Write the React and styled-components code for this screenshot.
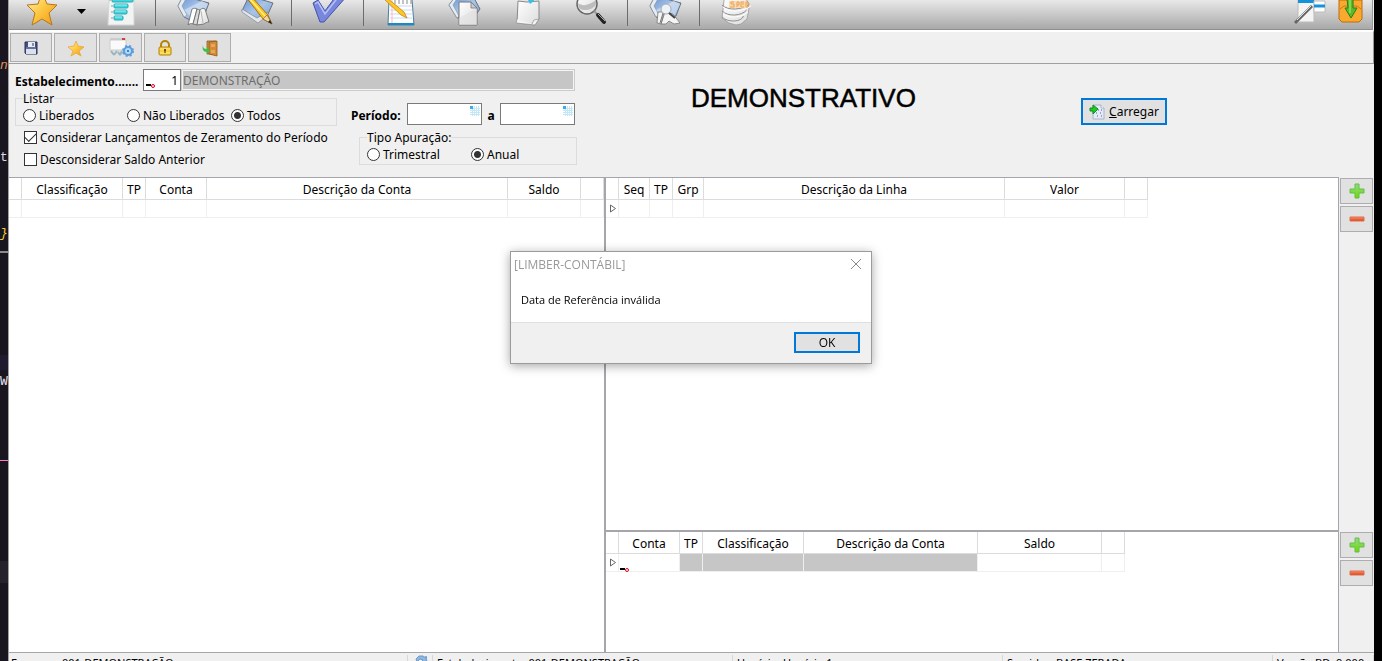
import React from "react";
import styled, { createGlobalStyle } from "styled-components";

const GlobalStyle = createGlobalStyle`
  * { box-sizing: border-box; }
  body { margin: 0; background: #000; overflow: hidden; }
  body, button, input {
    font-family: "Noto Sans", "DejaVu Sans", sans-serif;
    font-size: 12px;
    color: #000;
  }
`;

/* ---------- frame ---------- */
const Screen = styled.div`
  display: flex;
  height: 100vh;
  background: #000;
`;
const EditorStrip = styled.aside`
  flex: 0 0 8px;
  display: flex;
  flex-direction: column;
  overflow: hidden;
  background: #1a1620;
  font: 13px/18px "Liberation Mono", monospace;
`;
const CodeLine = styled.div`
  flex: none;
  height: ${(p) => p.$h}px;
  padding-top: ${(p) => p.$pad || 0}px;
  color: ${(p) => p.$color || "inherit"};
  background: ${(p) => p.$bg || "transparent"};
  font-style: ${(p) => (p.$italic ? "italic" : "normal")};
  overflow: hidden;
`;
const Window = styled.main`
  flex: 1;
  min-width: 0;
  display: flex;
  flex-direction: column;
  margin-right: 8px;
  border-left: 1px solid #a0a0a0;
  background: #f0f0f0;
`;

/* ---------- toolbars ---------- */
const MainToolbar = styled.header`
  flex: none;
  display: flex;
  height: 30px;
  margin-right: 1px;
  border-right: 1px solid #999;
  border-bottom: 1px solid #8f8f8f;
  background: linear-gradient(#e8e8e8, #a9a9a9);
`;
const ToolButton = styled.button`
  width: ${(p) => p.$w || 64}px;
  height: 28px;
  padding: 0;
  border: 0;
  background: none;
  display: flex;
  justify-content: center;
`;
const ToolSeparator = styled.span`
  width: 1px;
  height: 26px;
  margin: 0 4px 0 3px;
  background: #6c6c6c;
`;
const Spacer = styled.div`
  flex: 1;
`;
const SubToolbar = styled.nav`
  flex: none;
  display: flex;
  gap: 2px;
  height: 34px;
  padding: 1px 1px 0;
  border-top: 2px solid #fff;
  border-right: 1px solid #999;
  border-bottom: 1px solid #a0a0a0;
`;
const FlatButton = styled.button`
  flex: none;
  width: ${(p) => p.$w || 43}px;
  height: ${(p) => p.$h || 29}px;
  padding: 0;
  border: 1px solid #adadad;
  background: #e1e1e1;
  display: flex;
  align-items: center;
  justify-content: center;
`;

/* ---------- filters ---------- */
const Filters = styled.form`
  flex: none;
  display: flex;
  align-items: flex-start;
  height: 113px;
`;
const FilterFields = styled.div`
  flex: 0 0 568px;
  padding: 5px 0 0 6px;
`;
const FieldRow = styled.div`
  display: flex;
  align-items: center;
  height: 22px;
`;
const FieldLabel = styled.label`
  width: ${(p) => p.$w}px;
  height: 22px;
  font-weight: 700;
  line-height: 26px;
  white-space: nowrap;
  text-align: ${(p) => p.$align || "left"};
`;
const InputBox = styled.div`
  position: relative;
  width: ${(p) => p.$w}px;
  height: 22px;
`;
const TextInput = styled.input`
  display: block;
  width: 100%;
  height: 22px;
  padding: 0 2px;
  border: 1px solid #7a7a7a;
  background: #fff;
  text-align: right;
`;
const ReadOnlyInput = styled.input`
  width: 394px;
  height: 22px;
  padding: 0 1px;
  border: 1px solid #ccc;
  outline: 1px solid #f4f4f4;
  outline-offset: -2px;
  background: #c6c6c6;
  color: #6d6d6d;
`;
const EditMark = styled.svg`
  position: absolute;
  left: 3px;
  bottom: 1px;
`;
const CalendarMark = styled.svg`
  position: absolute;
  right: 2px;
  top: 3px;
`;
const FilterColumns = styled.div`
  display: flex;
`;
const ListColumn = styled.div`
  width: 322px;
  margin-right: 14px;
`;
const PeriodColumn = styled.div`
  width: 226px;
  padding-top: 12px;
`;
const OptionGroup = styled.fieldset`
  min-width: 0;
  margin: ${(p) => (p.$indent ? "5px 0 0 8px" : "0")};
  padding: 0 0 0 7px;
  border: 1px solid #dcdcdc;
`;
const GroupTitle = styled.legend`
  height: 14px;
  padding: 0;
  line-height: 16px;
`;
const OptionGrid = styled.div`
  display: grid;
  grid-template-columns: repeat(3, 104px);
  height: 20px;
`;
const Option = styled.label`
  display: flex;
  align-items: center;
  gap: 3px;
  white-space: nowrap;
`;
const Radio = styled.input`
  appearance: none;
  flex: none;
  width: 13px;
  height: 13px;
  margin: 0;
  border: 1px solid #333;
  border-radius: 50%;
  background: #fff;
  &:checked { background: radial-gradient(circle, #333 3px, #fff 4px); }
`;
const CheckRow = styled.label`
  display: flex;
  align-items: center;
  gap: 3px;
  height: 22px;
  padding-left: 9px;
  white-space: nowrap;
`;
const CheckBox = styled.input`
  appearance: none;
  flex: none;
  display: grid;
  place-items: center;
  width: 13px;
  height: 13px;
  margin: 0;
  border: 1px solid #333;
  background: #fff;
  &:checked::after {
    content: "";
    width: 10px;
    height: 5px;
    margin-bottom: 3px;
    border: solid #333;
    border-width: 0 0 1px 1px;
    transform: rotate(-45deg);
  }
`;
const Title = styled.h1`
  flex: 1;
  margin: 20px 0 0 114px;
  font: 400 26px/28px "Liberation Sans", Arial, sans-serif;
  -webkit-text-stroke: 0.5px #000;
`;
const LoadButton = styled.button`
  flex: none;
  display: flex;
  align-items: center;
  justify-content: center;
  gap: 4px;
  width: 86px;
  height: 27px;
  margin: 34px 207px 0 0;
  padding: 0;
  border: 2px solid #0078d7;
  background: #e1e1e1;
`;

/* ---------- grids ---------- */
const Workspace = styled.section`
  flex: 1;
  min-height: 0;
  display: flex;
  border-bottom: 1px solid #a5a5ab;
`;
const Panes = styled.div`
  flex: 1;
  min-width: 0;
  display: flex;
  border-top: 1px solid #a5a5ab;
  border-right: 1px solid #a5a5ab;
  background: #fff;
`;
const LeftPane = styled.div`
  flex: 0 0 597px;
  border-right: 2px solid #a5a5ab;
`;
const RightPanes = styled.div`
  flex: 1;
  min-width: 0;
  display: flex;
  flex-direction: column;
`;
const Pane = styled.div`
  flex: ${(p) => (p.$lower ? "0 0 122px" : "1")};
  border-top: ${(p) => (p.$lower ? "2px solid #a5a5ab" : "0")};
`;
const SideColumn = styled.div`
  flex: 0 0 35px;
  display: flex;
  flex-direction: column;
  justify-content: space-between;
  padding: 1px 1px 0;
`;
const SideButtons = styled.div`
  display: flex;
  flex-direction: column;
  gap: 2px;
  height: ${(p) => p.$h || 54}px;
`;
const Table = styled.table`
  table-layout: fixed;
  border-collapse: separate;
  border-spacing: 0;
  width: ${(p) => p.$w}px;
`;
const HeadCell = styled.th`
  height: 22px;
  padding: 3px 0 0;
  border-right: 1px solid #dcdcdc;
  border-bottom: 1px solid #dcdcdc;
  font-weight: 400;
  line-height: 18px;
  white-space: nowrap;
`;
const BodyCell = styled.td`
  position: relative;
  height: 18px;
  padding: 0 0 0 3px;
  border-right: 1px solid #efefef;
  border-bottom: 1px solid #efefef;
  background: ${(p) => (p.$shaded ? "#c6c6c6" : "#fff")};
  line-height: 0;
`;
const CellMark = styled.svg`
  position: absolute;
  left: 1px;
  bottom: -3px;
`;

/* ---------- status bar ---------- */
const StatusBar = styled.footer`
  flex: 0 0 8px;
  display: flex;
  padding-top: 2px;
  overflow: hidden;
`;
const StatusCell = styled.div`
  flex: ${(p) => (p.$grow ? "1" : "none")};
  width: ${(p) => (p.$w ? p.$w + "px" : "auto")};
  height: 20px;
  padding-left: ${(p) => p.$pad || 4}px;
  border-right: 1px solid #d7d7d7;
  font-size: 11px;
  line-height: 16px;
  white-space: pre;
  overflow: hidden;
`;

/* ---------- dialog ---------- */
const DialogBox = styled.div`
  position: fixed;
  top: 251px;
  left: 0;
  right: 0;
  width: 362px;
  margin: 0 auto;
  border: 1px solid #9b9b9b;
  background: #fff;
  box-shadow: 0 2px 10px rgba(0, 0, 0, 0.35);
  font-family: "Open Sans", "Noto Sans", sans-serif;
`;
const DialogHeader = styled.div`
  display: flex;
  align-items: center;
  justify-content: space-between;
  height: 24px;
  padding: 0 9px 0 3px;
  color: #999;
`;
const CloseButton = styled.button`
  display: flex;
  padding: 0;
  border: 0;
  background: none;
`;
const DialogText = styled.p`
  margin: 0;
  height: 46px;
  padding: 16px 10px 0;
  font-size: 11px;
  line-height: 16px;
`;
const DialogFooter = styled.div`
  display: flex;
  justify-content: flex-end;
  height: 41px;
  padding: 9px 11px 0;
  border-top: 1px solid #dfdfdf;
  background: #f0f0f0;
`;
const OkButton = styled.button`
  width: 66px;
  height: 21px;
  padding: 0;
  border: 2px solid #0078d7;
  background: #e1e1e1;
  font-family: inherit;
  line-height: 16px;
`;

/* ---------- drawings ---------- */
const Gradients = styled.svg`
  position: absolute;
`;
const Defs = () => (
  <Gradients width="0" height="0" aria-hidden="true">
    <defs>
      <linearGradient id="gold" x1="0" y1="0" x2="1" y2="1">
        <stop offset="0" stopColor="#fff6b8" /><stop offset=".5" stopColor="#fdc843" /><stop offset="1" stopColor="#ef9416" />
      </linearGradient>
      <linearGradient id="blue" x1="0" y1="0" x2="1" y2="1">
        <stop offset="0" stopColor="#5f8fd0" /><stop offset=".5" stopColor="#a9c4e8" /><stop offset="1" stopColor="#7a9ccc" />
      </linearGradient>
      <linearGradient id="paper" x1="0" y1="0" x2="1" y2="1">
        <stop offset="0" stopColor="#fff" /><stop offset="1" stopColor="#dcdcdc" />
      </linearGradient>
      <linearGradient id="green" x1="0" y1="0" x2="0" y2="1">
        <stop offset="0" stopColor="#93d98b" /><stop offset="1" stopColor="#6cdb00" />
      </linearGradient>
      <linearGradient id="red" x1="0" y1="0" x2="0" y2="1">
        <stop offset="0" stopColor="#f6996b" /><stop offset="1" stopColor="#e03a16" />
      </linearGradient>
    </defs>
  </Gradients>
);
const Art = ({ w = 36, h = 28, children }) => (
  <svg width={w} height={h} viewBox={`0 0 ${w} ${h}`} fill="none" aria-hidden="true">{children}</svg>
);
const BigStar = () => (
  <Art><path d="M19-8 24 4l10 1-8 8 3 12-10-6-10 6 3-12-8-8 11-1z" fill="url(#gold)" stroke="#b5761f" /></Art>
);
const TreeList = () => (
  <Art>
    <path d="M6-2h25v27H5z" fill="#f2f4f4" stroke="#d2d5d6" />
    {[[9, -2, 21], [11, 4, 14], [11, 10, 13], [11, 16, 9]].map(([x, y, w]) => (
      <g key={y}><rect x={x} y={y} width={w} height="4" rx="1" fill="#46d5dc" stroke="#20a8b4" /><path d={`M${x + 1} ${y + 1}h${w - 2}`} stroke="#a2f2f4" /><path d={`M${x - 3} ${y + 2}h2`} stroke="#999" /></g>
    ))}
  </Art>
);
const Frame = () => (
  <g>
    <path d="M9-4 35 3 30 16 18 21 10 17 4 6z" fill="url(#blue)" stroke="#69727f" />
    <path d="M9-4 4 6l6 11 3-2-5-9 5-9z" fill="#e6ebf2" stroke="#8792a0" strokeWidth=".6" />
    <path d="M10 10 28 1l6 3-5 11-10 4z" fill="#dbe7f6" opacity=".6" />
  </g>
);
const Report = () => (
  <Art>
    <Frame />
    <path d="M18 9c2-1 4-1 5 0l-4 15c-2-1-4 0-5 1z" fill="#fff" stroke="#666" strokeWidth=".8" />
    <path d="M23 9c1 0 2 1 3 1l-3 15-4-1z" fill="#d8d8d8" stroke="#666" strokeWidth=".8" />
    <path d="M26 10c2-2 4-2 5-1l4 13c-2 0-4 1-5 2l-7 1z" fill="url(#paper)" stroke="#666" strokeWidth=".8" />
    <path d="M27 11l2 12" stroke="#b5b5b5" />
  </Art>
);
const EditFrame = () => (
  <Art>
    <path d="M11-4 35 3 30 14 20 21 4 11z" fill="url(#blue)" stroke="#69727f" />
    <path d="M4 9l15 9 11-6v3l-10 8L4 12z" fill="#e3e7ec" stroke="#737c88" strokeWidth=".6" />
    <path d="M8-3 12-5 30 15l4 9-9-5z" fill="#ffc31e" stroke="#8c6111" strokeWidth=".8" />
    <path d="M10-3 27 16" stroke="#fff08a" strokeWidth="1.5" />
    <path d="m25 19 4-4 5 9z" fill="#f3d6a3" stroke="#76562d" strokeWidth=".6" /><path d="m32 20 2 4-4-2z" fill="#222" />
    <path d="m7-1 5-4" stroke="#c6382b" strokeWidth="4" />
  </Art>
);
const Check = () => (
  <Art><path d="M3 3 8 0l7 11L26-4h11L14 22h-4z" fill="#7886dc" stroke="#4453ac" /><path d="M5 4l3-2 7 12L29-4" stroke="#b7c1fb" strokeWidth="1.5" /></Art>
);
const Notepad = () => (
  <Art><path d="M7-1h23l2 26H6z" fill="#fff" stroke="#4a7ea6" /><path d="M6 24h26" stroke="#168bc4" strokeWidth="2" />{[6, 10, 14, 18].map((y) => <path key={y} d={`M8 ${y}h22`} stroke="#c6daee" />)}<path d="M10 0v23" stroke="#ffb5b5" /><path d="M13 4v-5M17 4v-5M21 4v-5M25 4v-5M29 4v-5" stroke="#888" /><path d="M4-3 22 12l3 6-6-3L2-1z" fill="#ffc720" stroke="#b07a13" strokeWidth=".7" /></Art>
);
const CopyDoc = () => (
  <Art><path d="M9-3 28-2 34 9 29 16 11 18 3 5z" fill="url(#blue)" stroke="#69727f" /><path d="M9-3 3 5l8 13 2-2L7 5l5-8z" fill="#e6ebf2" stroke="#8792a0" strokeWidth=".6" /><path d="M13 2h12l6 6v17H13z" fill="url(#paper)" stroke="#777" /><path d="M13 18 31 8v17H13z" fill="#e0e0e0" opacity=".6" /><path d="M25 2v6h6z" fill="#ccc" stroke="#777" strokeWidth=".8" /></Art>
);
const PinNote = () => (
  <Art><path d="M8 1l9 1 12-1v18l-4 6-18-2z" fill="url(#paper)" stroke="#888" /><path d="M7 19l-1 4 19 2 4-6-5 1-2 4" fill="#f4f4f4" stroke="#999" strokeWidth=".8" /><path d="M17-2h6l1 3-4 3z" fill="#39bfe8" /></Art>
);
const Magnifier = () => (
  <Art><circle cx="13" cy="4" r="10" fill="url(#paper)" stroke="#666" strokeWidth="1.5" /><path d="M4 3c5 4 11 2 18-3v4c-2 6-14 8-17 4z" fill="#bdbdbd" /><path d="m20 11 3 3" stroke="#999" strokeWidth="2" /><path d="m24 15 6 7" stroke="#222" strokeWidth="4" strokeLinecap="round" /><path d="m24 14 7 7" stroke="#aaa" /></Art>
);
const FindFrame = () => (
  <Art><Frame /><path d="M12 12l6 0-3 12-4-1zM15 24l4-12 8 2 7 9-6 1-5-3-3 3z" fill="#f4f4f4" stroke="#777" strokeWidth=".8" /><path d="M17 13l-3 10" stroke="#777" /><circle cx="20" cy="9" r="5" fill="#edf2f9" stroke="#aaa" /><path d="m23 13 6 5" stroke="#444" strokeWidth="2" /></Art>
);
const Sped = () => (
  <Art><path d="M6 0C9-4 28-5 30 2l1 7-2 10-6 5-5 1-7-2-7-5 1-8z" fill="url(#paper)" stroke="#999" strokeWidth=".8" />{[5, 11, 17].map((y) => <path key={y} d={`M4 ${y}c6 6 20 5 ${30 - y / 2}-1`} stroke="#8d8d8d" />)}<path d="M5 7c6 6 20 5 28-1M5 13c6 6 18 5 25-1" stroke="#fff" /><rect x="11" y="1" width="18" height="7" fill="#f8dab5" /><path d="M16 2h-3v2h3v3h-4m7 0V2h2v3h-2m7-3h-3v5h3m-2-3h2m2-2v5h2V2z" stroke="#f0a04c" /></Art>
);
const Wand = () => (
  <Art><path d="M8-2h16v24H8z" fill="#f4f4f4" stroke="#bbb" /><path d="M8 1h16" stroke="#1493dd" strokeWidth="4" /><path d="M24 1h11v11H24z" fill="#fff" stroke="#bbb" /><path d="M24 6h11" stroke="#1493dd" strokeWidth="3" /><path d="M5 23 22 6" stroke="#666" strokeWidth="3" /><path d="M7 20 21 6" stroke="#ddd" /></Art>
);
const BoxDown = () => (
  <Art w={28}><path d="M2 0h23v19l-3 3H5l-3-3z" fill="#f9a92e" stroke="#bd6d08" /><path d="M3 9l4-3h13l4 3" stroke="#c57a17" /><path d="M10-2h6v10h4l-6 10L8 8h3z" fill="#57bd2b" stroke="#2b7d12" /><path d="M13 0v13" stroke="#b4ef7b" /></Art>
);
const Floppy = () => (
  <Art w={16} h={16}><path d="M2 2h12v12H3l-1-1z" fill="#47517f" stroke="#28305c" /><path d="M5 2h7v5H5z" fill="#e8ecf7" /><path d="M10 3v3" stroke="#28305c" /><path d="M3 9h10v5H3z" fill="#dbe0ef" /><path d="M3 8h10" stroke="#8995bb" /></Art>
);
const SmallStar = () => (
  <Art w={18} h={18}><path d="m9 2 2 5 6 1-5 4 2 5-5-3-5 3 2-5-5-4 6-1z" fill="url(#gold)" stroke="#e9a63c" strokeWidth=".8" /></Art>
);
const ConfigWindow = () => (
  <Art w={26} h={20}><path d="M2 2h16v10H2z" fill="#fafafa" stroke="#ccc" /><path d="M2 1h16" stroke="#bbb" /><path d="M14 1h3" stroke="#d43b3b" strokeWidth="2" /><path d="M3 13l3 4M9 13l-3 4M10 14l2 3M14 13l-2 4" stroke="#98b5c2" strokeWidth="2" /><circle cx="20" cy="13" r="4" fill="#b4dbfa" stroke="#5b9ddd" strokeWidth="2" /><circle cx="20" cy="13" r="5" stroke="#5b9ddd" strokeWidth="2" strokeDasharray="2 2" /><path d="M20 12v2" stroke="#3f81cc" strokeWidth="2" /></Art>
);
const Padlock = () => (
  <Art w={16} h={18}><path d="M4 8V6a4 4 0 0 1 8 0v2" stroke="#b58405" strokeWidth="2" /><rect x="2" y="8" width="12" height="8" rx="1" fill="#f9cf3f" stroke="#b58405" /><path d="M3 10h10M3 14h10" stroke="#ffe98a" /><path d="M8 10v4M7 11h2" stroke="#372800" /></Art>
);
const Door = () => (
  <Art w={18} h={18}><path d="M6 2h9v13H6z" fill="#d69a4b" stroke="#8c571c" strokeWidth=".8" /><path d="M8 3l8-1v15l-8-2z" fill="#d88a33" stroke="#8c571c" strokeWidth=".8" /><path d="M10 5h4v3h-4zM10 11h4v3h-4z" fill="#e5a85a" /><path d="M2 6c0 3 1 4 4 4V8l3 4-3 3v-2c-4 0-5-3-4-7z" fill="#3fbf49" /></Art>
);
const LoadDoc = () => (
  <Art w={16} h={16}><path d="M4 1h8l3 3v11H4z" fill="#e4ebf8" stroke="#a9b4cb" /><path d="M12 1v3h3" stroke="#a9b4cb" fill="#fff" /><path d="M9 6h1M12 6h1M7 9h1M11 9h1M8 12h1M12 12h1" stroke="#56627c" /><path d="M1 4h3V1l5 4-5 5V7H1z" fill="#16cf20" stroke="#168a20" /></Art>
);
const Plus = () => (
  <Art w={16} h={16}><path d="M6 1h4v5h5v4h-5v5H6v-5H1V6h5z" fill="url(#green)" stroke="#65bf48" /></Art>
);
const Minus = () => (
  <Art w={16} h={16}><path d="M1 6h14v4H1z" fill="url(#red)" stroke="#df6f50" /></Art>
);
const calendarIcon = (
  <CalendarMark width="10" height="10" viewBox="0 0 10 10" aria-hidden="true">
    <rect width="10" height="10" fill="#fff" />
    <path d="M2.5 0v10M4.5 0v10M6.5 0v10M8.5 0v10M0 2.5h10M0 4.5h10M0 6.5h10M0 8.5h10" stroke="#c4e7f6" />
    <path d="M0 0h3v3H0z" fill="#39aee6" />
  </CalendarMark>
);
const markShape = (
  <g><path d="M0 3h5" stroke="#000" strokeWidth="2" /><circle cx="7" cy="4" r="1.5" fill="#fff" stroke="#e00020" /></g>
);
const RowPointer = () => (
  <Art w={8} h={9}><path d="M1.5 1v7l5-3.5z" stroke="#666" /></Art>
);

/* ---------- data grid ---------- */
const leftColumns = [["", 13], ["Classificação", 101], ["TP", 23], ["Conta", 61], ["Descrição da Conta", 301], ["Saldo", 73], ["", 23]];
const lineColumns = [["", 13], ["Seq", 31], ["TP", 23], ["Grp", 31], ["Descrição da Linha", 301], ["Valor", 120], ["", 23]];
const accountColumns = [["", 13], ["Conta", 61], ["TP", 23, true], ["Classificação", 101, true], ["Descrição da Conta", 174, true], ["Saldo", 124], ["", 23]];

function DataGrid({ columns, pointer, editing, label }) {
  return (
    <Table $w={columns.reduce((sum, c) => sum + c[1], 0)} aria-label={label}>
      <colgroup>{columns.map((c, i) => <col key={i} width={c[1]} />)}</colgroup>
      <thead><tr>{columns.map((c, i) => <HeadCell key={i}>{c[0]}</HeadCell>)}</tr></thead>
      <tbody>
        <tr>
          {columns.map((c, i) => (
            <BodyCell key={i} $shaded={c[2]}>
              {i === 0 && pointer && <RowPointer />}
              {i === 1 && editing && <CellMark width="10" height="8" viewBox="0 0 10 8" aria-hidden="true">{markShape}</CellMark>}
            </BodyCell>
          ))}
        </tr>
      </tbody>
    </Table>
  );
}

const PlusMinus = ({ h }) => (
  <SideButtons $h={h}>
    <FlatButton type="button" $w={33} $h={26} aria-label="Adicionar"><Plus /></FlatButton>
    <FlatButton type="button" $w={33} $h={26} aria-label="Remover"><Minus /></FlatButton>
  </SideButtons>
);

export default function App() {
  return (
    <Screen>
      <GlobalStyle />
      <Defs />
      <EditorStrip aria-hidden="true">
        <CodeLine $h={146} $pad={57} $color="#e0925c" $italic>n</CodeLine>
        <CodeLine $h={78} $pad={3} $color="#dcd8e4">to</CodeLine>
        <CodeLine $h={27} $pad={1} $color="#f5d033" $italic>{"}"}</CodeLine>
        <CodeLine $h={2} $bg="#8a8a8a" />
        <CodeLine $h={102} />
        <CodeLine $h={15} $bg="#211b30" />
        <CodeLine $h={90} $pad={3} $color="#e6e2ee">W</CodeLine>
        <CodeLine $h={1} $bg="#ff79c6" />
        <CodeLine $h={100} />
        <CodeLine $h={22} $bg="#26222c" />
      </EditorStrip>
      <Window>
        <MainToolbar>
          <ToolButton aria-label="Favoritos"><BigStar /></ToolButton>
          <ToolButton $w={17} aria-label="Mais favoritos"><Art w={9}><path d="M0 9h9l-4.5 5z" fill="#000" /></Art></ToolButton>
          <ToolButton $w={62} aria-label="Plano"><TreeList /></ToolButton>
          <ToolSeparator />
          <ToolButton aria-label="Relatório"><Report /></ToolButton>
          <ToolButton aria-label="Editar"><EditFrame /></ToolButton>
          <ToolSeparator />
          <ToolButton aria-label="Confirmar"><Check /></ToolButton>
          <ToolSeparator />
          <ToolButton aria-label="Anotar"><Notepad /></ToolButton>
          <ToolButton aria-label="Copiar"><CopyDoc /></ToolButton>
          <ToolButton aria-label="Colar"><PinNote /></ToolButton>
          <ToolButton aria-label="Pesquisar"><Magnifier /></ToolButton>
          <ToolSeparator />
          <ToolButton aria-label="Consultar"><FindFrame /></ToolButton>
          <ToolSeparator />
          <ToolButton aria-label="SPED"><Sped /></ToolButton>
          <Spacer />
          <ToolButton $w={43} aria-label="Personalizar"><Wand /></ToolButton>
          <ToolButton $w={43} aria-label="Baixar"><BoxDown /></ToolButton>
        </MainToolbar>
        <SubToolbar>
          <FlatButton $w={42} aria-label="Salvar"><Floppy /></FlatButton>
          <FlatButton aria-label="Favorito"><SmallStar /></FlatButton>
          <FlatButton aria-label="Configurar"><ConfigWindow /></FlatButton>
          <FlatButton $w={42} aria-label="Bloquear"><Padlock /></FlatButton>
          <FlatButton aria-label="Sair"><Door /></FlatButton>
        </SubToolbar>

        <Filters onSubmit={(e) => e.preventDefault()}>
          <FilterFields>
            <FieldRow>
              <FieldLabel htmlFor="estab" $w={128}>Estabelecimento.......</FieldLabel>
              <InputBox $w={38}>
                <TextInput id="estab" defaultValue="1" />
                <EditMark width="10" height="8" viewBox="0 0 10 8" aria-hidden="true">{markShape}</EditMark>
              </InputBox>
              <ReadOnlyInput readOnly value="DEMONSTRAÇÃO" aria-label="Nome do estabelecimento" />
            </FieldRow>
            <FilterColumns>
              <ListColumn>
                <OptionGroup>
                  <GroupTitle>Listar</GroupTitle>
                  <OptionGrid>
                    <Option><Radio type="radio" name="listar" />Liberados</Option>
                    <Option><Radio type="radio" name="listar" />Não Liberados</Option>
                    <Option><Radio type="radio" name="listar" defaultChecked />Todos</Option>
                  </OptionGrid>
                </OptionGroup>
                <CheckRow><CheckBox type="checkbox" defaultChecked />Considerar Lançamentos de Zeramento do Período</CheckRow>
                <CheckRow><CheckBox type="checkbox" />Desconsiderar Saldo Anterior</CheckRow>
              </ListColumn>
              <PeriodColumn>
                <FieldRow>
                  <FieldLabel htmlFor="inicio" $w={56}>Período:</FieldLabel>
                  <InputBox $w={75}><TextInput id="inicio" />{calendarIcon}</InputBox>
                  <FieldLabel htmlFor="fim" $w={18} $align="center">a</FieldLabel>
                  <InputBox $w={75}><TextInput id="fim" />{calendarIcon}</InputBox>
                </FieldRow>
                <OptionGroup $indent>
                  <GroupTitle>Tipo Apuração:</GroupTitle>
                  <OptionGrid>
                    <Option><Radio type="radio" name="tipo" />Trimestral</Option>
                    <Option><Radio type="radio" name="tipo" defaultChecked />Anual</Option>
                  </OptionGrid>
                </OptionGroup>
              </PeriodColumn>
            </FilterColumns>
          </FilterFields>
          <Title>DEMONSTRATIVO</Title>
          <LoadButton type="button"><LoadDoc /><span><u>C</u>arregar</span></LoadButton>
        </Filters>

        <Workspace>
          <Panes>
            <LeftPane><DataGrid label="Contas" columns={leftColumns} /></LeftPane>
            <RightPanes>
              <Pane><DataGrid label="Linhas" columns={lineColumns} pointer /></Pane>
              <Pane $lower><DataGrid label="Contas da linha" columns={accountColumns} pointer editing /></Pane>
            </RightPanes>
          </Panes>
          <SideColumn>
            <PlusMinus />
            <PlusMinus h={120} />
          </SideColumn>
        </Workspace>

        <StatusBar>
          <StatusCell $w={399} $pad={2}>Empresa: 001-DEMONSTRAÇÃO</StatusCell>
          <StatusCell $w={25} $pad={6}><Art w={14} h={12}><path d="M2 4l3-3h4l3 2V1l1 6H7l2-2-3-1-3 3z" fill="#8db5df" stroke="#6d9bd0" /></Art></StatusCell>
          <StatusCell $w={300}>Estabelecimento: 001-DEMONSTRAÇÃO</StatusCell>
          <StatusCell $grow>Usuário: Usuário 1</StatusCell>
          <StatusCell $w={270}>Servidor: BASE ZERADA</StatusCell>
          <StatusCell $w={101}>Versão BD: 9.000</StatusCell>
        </StatusBar>
      </Window>

      <DialogBox role="dialog" aria-labelledby="dialog-title">
        <DialogHeader>
          <span id="dialog-title">[LIMBER-CONTÁBIL]</span>
          <CloseButton aria-label="Fechar"><Art w={12} h={12}><path d="m1 1 10 10M11 1 1 11" stroke="#888" /></Art></CloseButton>
        </DialogHeader>
        <DialogText>Data de Referência inválida</DialogText>
        <DialogFooter><OkButton>OK</OkButton></DialogFooter>
      </DialogBox>
    </Screen>
  );
}
